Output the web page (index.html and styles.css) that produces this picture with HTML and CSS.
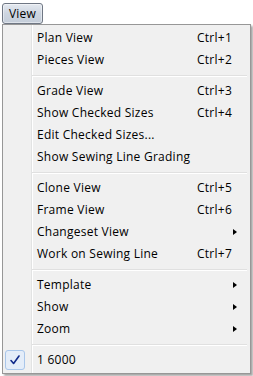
FILE: index.html
```html
<!DOCTYPE html>
<html>
<head>
<meta charset="utf-8">
<link rel="stylesheet" href="styles.css">
</head>
<body>
<div class="bar">
  <div class="bar-btn">View</div>
</div>
<div class="menu">
  <div class="item"><span class="chk"></span><span class="lbl">Plan View</span><span class="sc">Ctrl+1</span></div>
  <div class="item"><span class="chk"></span><span class="lbl">Pieces View</span><span class="sc">Ctrl+2</span></div>
  <div class="sep"></div>
  <div class="item"><span class="chk"></span><span class="lbl">Grade View</span><span class="sc">Ctrl+3</span></div>
  <div class="item"><span class="chk"></span><span class="lbl">Show Checked Sizes</span><span class="sc">Ctrl+4</span></div>
  <div class="item"><span class="chk"></span><span class="lbl">Edit Checked Sizes...</span></div>
  <div class="item"><span class="chk"></span><span class="lbl">Show Sewing Line Grading</span></div>
  <div class="sep"></div>
  <div class="item"><span class="chk"></span><span class="lbl">Clone View</span><span class="sc">Ctrl+5</span></div>
  <div class="item"><span class="chk"></span><span class="lbl">Frame View</span><span class="sc">Ctrl+6</span></div>
  <div class="item"><span class="chk"></span><span class="lbl">Changeset View</span><span class="sc"></span><span class="arr"></span></div>
  <div class="item"><span class="chk"></span><span class="lbl">Work on Sewing Line</span><span class="sc">Ctrl+7</span></div>
  <div class="sep"></div>
  <div class="item"><span class="chk"></span><span class="lbl">Template</span><span class="sc"></span><span class="arr"></span></div>
  <div class="item"><span class="chk"></span><span class="lbl">Show</span><span class="sc"></span><span class="arr"></span></div>
  <div class="item"><span class="chk"></span><span class="lbl">Zoom</span><span class="sc"></span><span class="arr"></span></div>
  <div class="sep"></div>
  <div class="item"><span class="chk on"><svg width="12" height="12" viewBox="0 0 12 12"><path d="M2 6.5 L4.6 9.5 L10 2" fill="none" stroke="#102a8a" stroke-width="1.6" stroke-linejoin="round" stroke-linecap="round"/></svg></span><span class="lbl">1 6000</span></div>
</div>
</body>
</html>
```
FILE: styles.css
```css
html, body {
  margin: 0;
  padding: 0;
  background: #ffffff;
}
body {
  font-family: "Open Sans", "Noto Sans", "DejaVu Sans", sans-serif;
  font-size: 12px;
  letter-spacing: 0.25px;
  color: #000;
  width: 253px;
  height: 376px;
  overflow: hidden;
}
.bar {
  display: flex;
  padding: 3px 0 0 2px;
  height: 24px;
  box-sizing: border-box;
}
.bar-btn {
  width: 41px;
  height: 21px;
  box-sizing: border-box;
  border: 1px solid #6f7784;
  border-radius: 3px;
  background: linear-gradient(#e4e9f0, #cdd5e0 50%, #c4cdd9);
  box-shadow: inset 0 0 0 1px rgba(255,255,255,0.45);
  display: flex;
  align-items: center;
  justify-content: center;
  line-height: 1;
}
.menu {
  margin-left: 2px;
  width: 249px;
  box-sizing: border-box;
  border: 1px solid #979797;
  padding: 2px;
  background:
    linear-gradient(to right, transparent 28px, #e2e3e3 28px, #e2e3e3 29px, #ffffff 29px, #ffffff 30px, transparent 30px),
    #f0f0f0;
  box-shadow: 2px 2px 2px rgba(0,0,0,0.35);
}
.item {
  display: grid;
  grid-template-columns: 32px 160px 36px 1fr;
  align-items: center;
  height: 22px;
}
.lbl, .sc {
  white-space: nowrap;
  line-height: 22px;
}
.chk {
  width: 20px;
  height: 20px;
  box-sizing: border-box;
  display: flex;
  align-items: center;
  justify-content: center;
}
.chk.on {
  border: 1px solid #a9c6ea;
  border-radius: 3px;
  background: #e4edf9;
}
.arr {
  width: 0;
  height: 0;
  border-left: 4px solid #000;
  border-top: 3.5px solid transparent;
  border-bottom: 3.5px solid transparent;
}
.sep {
  height: 9px;
  box-sizing: border-box;
  padding-top: 4px;
  margin: 0 1px 0 27px;
}
.sep::before {
  content: "";
  display: block;
  height: 1px;
  background: #e0e0e0;
  border-bottom: 1px solid #ffffff;
}
```
